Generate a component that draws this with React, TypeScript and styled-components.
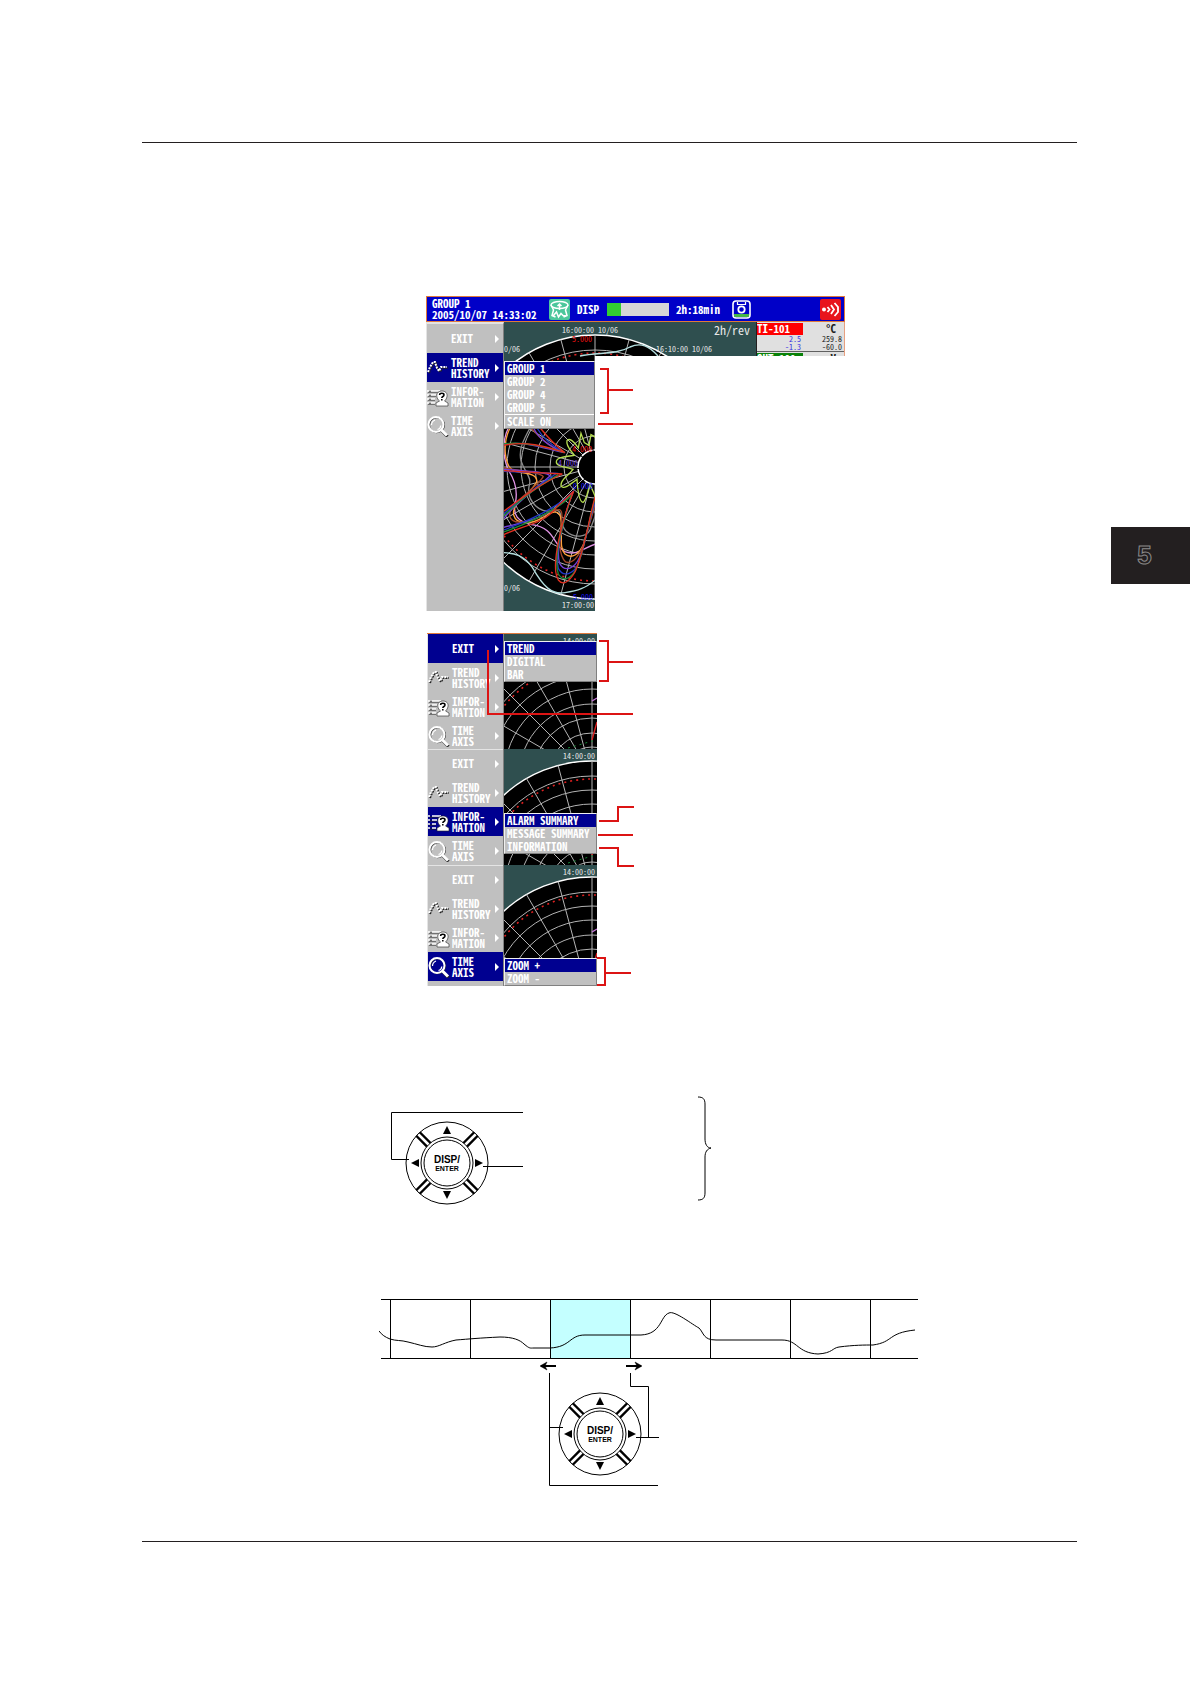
import React from "react";
import styled, { createGlobalStyle } from "styled-components";

const INK = "#231f20";
const RED = "#dc1414";
const PIXEL_FONT = '"Noto Sans Mono CJK JP", "Noto Sans Mono CJK SC", "Liberation Mono", monospace';

const GlobalStyle = createGlobalStyle`
  *, *::before, *::after { box-sizing: border-box; }
  body { margin: 0; background: #fff; }
  svg { display: block; }
`;

/* ---------- page frame ---------- */

const Page = styled.div`
  display: grid;
  grid-template-columns: minmax(0, 1fr) 80px;
  font-family: "Liberation Sans", Arial, sans-serif;
  color: ${INK};
`;

const Sheet = styled.div`
  padding: 142px 34px 142px 142px;
`;

const Content = styled.main`
  display: flex;
  flex-direction: column;
  align-items: flex-start;
  border-top: 1px solid ${INK};
  border-bottom: 1px solid ${INK};
  padding: 153px 0 46px;
`;

const Figure = styled.figure<{ $indent: number; $gap: number }>`
  margin: ${(p) => p.$gap}px 0 0 ${(p) => p.$indent}px;
`;

const ChapterTab = styled.aside`
  display: flex;
  align-items: center;
  justify-content: center;
  align-self: start;
  margin: 527px 1px 0 0;
  height: 57px;
  padding-right: 12px;
  background: ${INK};
  color: ${INK};
  font-size: 26px;
  font-weight: 700;
  line-height: 57px;
  -webkit-text-stroke: 1px #8c8a8a;
`;

/* ---------- recorder screen ---------- */

const Recorder = styled.div`
  width: 419px;
  font-family: ${PIXEL_FONT};
`;

const TitleBar = styled.header`
  display: grid;
  grid-template-columns: 117px 28px 30px 69px 56px 1fr auto;
  align-items: center;
  height: 26px;
  padding: 0 3px 0 5px;
  border: 1px solid #e07a3c;
  background: #0000c8;
  color: #fff;
  font-size: 11px;
  line-height: 11px;
  font-weight: 700;
  white-space: nowrap;
`;

const Stamp = styled.span`
  display: grid;
  grid-template-rows: 11px 11px;
`;

const Progress = styled.div`
  width: 62px;
  height: 13px;
  background: #d6d6d6;
`;

const ProgressFill = styled.div`
  width: 14px;
  height: 100%;
  background: #32cd32;
`;

const RecorderBody = styled.div`
  display: grid;
  grid-template-columns: 78px 91px 1fr 89px;
  grid-template-rows: 34px 255px;
`;

const Menu = styled.nav`
  display: flex;
  flex-direction: column;
  grid-column: 1;
  grid-row: 1 / -1;
  overflow: hidden;
  background: #c0c0c0;
  border-top: 2px solid #e4e4e4;
  border-left: 1px solid #e4e4e4;
  border-right: 1px solid #808080;
`;

const MenuButton = styled.button<{ $active?: boolean }>`
  display: grid;
  grid-template-columns: 24px 1fr 8px;
  align-items: center;
  flex: none;
  height: 29px;
  padding: 0;
  border: 0;
  border-radius: 0;
  background: ${(p) => (p.$active ? "#000090" : "transparent")};
  color: #fff;
  font-family: ${PIXEL_FONT};
  font-size: 11px;
  line-height: 11px;
  font-weight: 700;
  text-align: left;
  white-space: pre;
`;

const Arrow = styled.span`
  width: 0;
  height: 0;
  border-left: 4px solid #fff;
  border-top: 4px solid transparent;
  border-bottom: 4px solid transparent;
`;

const SubMenu = styled.div<{ $top: number }>`
  grid-column: 2;
  grid-row: -2;
  align-self: start;
  z-index: 1;
  min-width: 0;
  margin-top: ${(p) => p.$top}px;
  border: 1px solid #f0f0f0;
  border-right-color: #808080;
  border-bottom-color: #808080;
  background: #c0c0c0;
`;

const SubItem = styled.button<{ $active?: boolean; $ruled?: boolean }>`
  display: block;
  width: 100%;
  height: ${(p) => (p.$ruled ? 14 : 13)}px;
  padding: 0 0 0 2px;
  border: 0;
  border-radius: 0;
  border-top: ${(p) => (p.$ruled ? "1px solid #fff" : "0")};
  background: ${(p) => (p.$active ? "#000090" : "transparent")};
  color: #fff;
  font-family: ${PIXEL_FONT};
  font-size: 11px;
  line-height: 13px;
  font-weight: 700;
  text-align: left;
  white-space: nowrap;
`;

const WideChart = styled.svg`
  grid-column: 2 / 4;
  grid-row: 1 / -1;
`;

const RecorderCallouts = styled.svg`
  grid-column: 3 / 5;
  grid-row: 2;
  z-index: 1;
`;

const Readouts = styled.div`
  grid-column: 4;
  grid-row: 1;
  overflow: hidden;
  border-left: 1px solid ${INK};
  border-right: 1px solid #e8a080;
  background: #e0e0e0;
`;

const Channel = styled.div`
  display: grid;
  grid-template-columns: 46px 1fr;
  grid-template-rows: 12px 8px 8px;
  height: 30px;
  padding-top: 1px;
  border-bottom: 1px solid #606060;
  font-size: 8px;
  line-height: 8px;
  color: #202020;
  text-align: right;
`;

const ChannelTag = styled.span<{ $color: string }>`
  background: ${(p) => p.$color};
  color: #fff;
  font-size: 11px;
  line-height: 11px;
  font-weight: 700;
  text-align: left;
`;

const ChannelUnit = styled.span`
  padding-right: 8px;
  font-size: 11px;
  line-height: 11px;
  font-weight: 700;
`;

const ChannelValue = styled.span<{ $blue?: boolean }>`
  padding-right: 2px;
  color: ${(p) => (p.$blue ? "#3a32e0" : "inherit")};
`;

/* ---------- menu panels ---------- */

const PanelGroup = styled.div`
  display: grid;
  grid-template-columns: 170px 38px;
  font-family: ${PIXEL_FONT};
`;

const PanelStack = styled.div`
  grid-column: 1;
  grid-row: 1;
  border-top: 1px solid #e07a3c;
`;

const Panel = styled.section<{ $height: number }>`
  display: grid;
  grid-template-columns: 77px 93px;
  grid-template-rows: ${(p) => p.$height}px;
  overflow: hidden;

  nav {
    border-top-width: 0;
    box-shadow: inset 0 1px #e4e4e4;
  }
`;

const PanelChart = styled.svg`
  grid-column: 2;
  grid-row: 1;
`;

const PanelCallouts = styled.svg`
  grid-column: 1 / 3;
  grid-row: 1;
  z-index: 2;
  pointer-events: none;
`;

/* ---------- icons ---------- */

const IconTrend = () => (
  <svg width="22" height="22" viewBox="0 0 22 22" fill="none">
    <path d="M2 16L4 11L7 6L9 6L11 12L13 15L15 11L21 11" stroke="#222" strokeWidth="2" strokeDasharray="2 1" />
    <path d="M1 15L3 10L6 5L8 5L10 11L12 14L14 10L20 10" stroke="#fff" strokeWidth="2" strokeDasharray="2 1" />
  </svg>
);

const IconInfo = () => (
  <svg width="22" height="22" viewBox="0 0 22 22" fill="none">
    <path d="M1 6H14M1 10H9M1 14H8M1 18H8" stroke="#222" strokeWidth="1.2" />
    <path d="M0 5H2M4 5H13M0 9H2M4 9H9M0 13H2M4 13H8M0 17H2M4 17H8" stroke="#fff" strokeWidth="1.600" />
    <path d="M9 20V17L12.500 15C9.500 13 9 8 11 6.500C13 4.500 17 4.500 19 6.500C21 8.500 20 13 17.500 15L21 17V20Z" fill="#fff" stroke="#222" strokeWidth="0.600" />
    <path d="M12.600 9C12.600 6.800 17 6.800 17 9C17 10.600 14.800 10.400 14.800 12M14.800 13V14.400" stroke="#000" strokeWidth="1.500" />
  </svg>
);

const IconLens = () => (
  <svg width="22" height="22" viewBox="0 0 22 22" fill="none">
    <circle cx="9.800" cy="10" r="7.500" stroke="#333" strokeWidth="1.400" />
    <path d="M15 16L20.500 21.500" stroke="#222" strokeWidth="3" />
    <circle cx="9" cy="9.500" r="7.500" stroke="#fff" strokeWidth="2" />
    <path d="M14.500 15L20 20.500" stroke="#fff" strokeWidth="3" />
    <path d="M4.500 10C4.500 7.500 5.500 6 8 5M10.500 14.500C12.400 14 13.600 12.600 13.800 10.500" stroke="#fff" strokeWidth="1.200" />
  </svg>
);

const IconChartDisk = () => (
  <svg width="21" height="21" viewBox="0 0 21 21" fill="none">
    <rect width="21" height="21" rx="2" fill="#4cc79c" />
    <ellipse cx="10.500" cy="6" rx="8.500" ry="3.500" stroke="#fff" strokeWidth="1.500" />
    <path d="M2 6L4.500 11L3 16.500L6.500 18M19 6L16.500 11L18 16.500L14.500 18" stroke="#fff" strokeWidth="1.500" />
    <path d="M10.500 11V5M8.500 7L10.500 5L12.500 7" stroke="#fff" strokeWidth="1.500" />
    <path d="M4 17L7.500 13L9.500 18L12 14.500L14 16.500L17 17" stroke="#fff" strokeWidth="1.500" />
  </svg>
);

const IconSnapshot = () => (
  <svg width="19" height="19" viewBox="0 0 19 19" fill="none">
    <rect x="1" y="1" width="17" height="17" rx="3" fill="#0000c8" stroke="#fff" strokeWidth="1.600" />
    <path d="M2 14H17V16L16 17H3L2 16Z" fill="#45b845" />
    <path d="M5.500 2V4.500H13.500V2" stroke="#fff" strokeWidth="1.200" />
    <circle cx="9.500" cy="9.500" r="3.200" stroke="#fff" strokeWidth="1.800" />
  </svg>
);

const IconAlarm = () => (
  <svg width="21" height="21" viewBox="0 0 21 21" fill="none">
    <rect width="21" height="21" rx="2" fill="#e8141c" />
    <circle cx="4" cy="10.500" r="2" fill="#fff" />
    <path d="M7.500 8L9.500 10.500L7.500 13M11 6L14 10.500L11 15M14.500 4L18 8V13L14.500 17" stroke="#fff" strokeWidth="1.800" />
  </svg>
);

/* ---------- charts ---------- */

const SPOKES = Array.from({ length: 24 }, (_, i) => (i * Math.PI) / 12);

const ChartText = styled.text`
  font-family: ${PIXEL_FONT};
  font-size: 8px;
`;

function PolarGrid({ cx, cy, rings, outer, inner }: { cx: number; cy: number; rings: number[]; outer: number; inner: number }) {
  return (
    <g fill="none">
      <circle cx={cx} cy={cy} r={outer} fill="#000" stroke="#fff" strokeWidth="1.400" />
      {rings.map((r) => (
        <circle key={r} cx={cx} cy={cy} r={r} stroke="#b4b4b4" />
      ))}
      {SPOKES.map((a) => (
        <line
          key={a}
          x1={cx + inner * Math.sin(a)}
          y1={cy + inner * Math.cos(a)}
          x2={cx + outer * Math.sin(a)}
          y2={cy + outer * Math.cos(a)}
          stroke="#b4b4b4"
        />
      ))}
      <circle cx={cx} cy={cy} r={outer - 18} stroke="#e02020" strokeWidth="1.600" strokeDasharray="2 4" />
    </g>
  );
}

const TRACES: [string, string][] = [
  ["#8c8c8c", "M345 -36C325 0 310 30 318 62C330 100 352 110 342 140C335 190 380 220 412 212C450 200 430 250 452 272C480 298 515 290 525 270L542 225"],
  ["#e294e6", "M280 -36C262 0 262 50 280 90C300 120 308 150 302 185C290 225 310 245 350 254C420 262 415 318 452 336C485 348 510 322 542 312"],
  ["#b4dede", "M266 338C300 340 325 345 352 382C385 440 410 465 450 458C490 452 510 445 542 420"],
  ["#ffa03c", "M285 -36C262 10 266 80 300 94C340 100 372 104 364 128C340 170 290 188 296 225C305 258 352 252 384 232C410 214 432 208 437 232C445 280 430 322 450 342C470 358 492 344 506 312L542 180"],
  ["#a04628", "M348 -36C380 0 410 26 448 38M266 84C320 92 380 98 385 110C360 150 280 190 284 228C292 262 360 242 400 218C430 205 445 200 440 240C432 300 430 345 452 366C474 374 490 350 504 318L542 190"],
  ["#7440d8", "M356 -36C372 0 410 22 448 38C400 30 330 0 266 14M266 88C330 92 400 96 405 108C370 140 300 190 266 236M266 262C310 250 370 240 410 210C450 190 455 170 474 155C450 220 420 330 434 370C450 400 480 384 494 352C515 300 520 240 542 185"],
  ["#2038c8", "M366 -36C382 -8 414 20 450 38M266 94L425 100C370 140 320 170 266 222M266 270C320 250 420 210 474 156C450 220 418 335 430 385C446 416 480 400 492 366C515 300 522 238 542 176"],
  ["#188c38", "M266 12C320 4 400 20 450 38M430 104C360 145 320 175 266 228M266 276C320 258 430 210 470 165C450 230 412 350 430 402C448 430 474 412 488 378C512 310 522 238 542 170"],
  ["#e03020", "M266 16C330 2 390 18 450 38C415 12 395 -12 376 -36M266 92L442 102C380 130 325 170 266 214M266 284C330 255 390 250 424 202C448 180 462 168 476 154C444 230 404 380 430 420C444 438 462 426 480 396C512 320 522 232 542 165"],
  ["#b4dc50", "M542 -8L528 -16L522 16L508 8L498 -20L490 24C478 4 462 -8 456 2C452 18 468 32 478 46C450 50 424 52 424 66C424 80 452 80 474 88C460 108 436 118 438 136C442 152 466 134 486 118C488 150 492 186 504 187C516 180 518 150 524 136C530 140 536 160 542 172"],
];

const RecorderTrend = () => (
  <WideChart width="252" height="289" viewBox="0 0 252 289">
    <defs>
      <clipPath id="visible-area">
        <path d="M0 0H252V34H91V289H0Z" />
      </clipPath>
    </defs>
    <g clipPath="url(#visible-area)">
      <rect width="252" height="289" fill="#2f4f4f" />
      <PolarGrid cx={91} cy={145} outer={132} inner={17} rings={[31, 45, 60, 74, 88, 102, 117]} />
      <path d="M76 34C95 30 112 33 126 25C137 20 145 24 154 34" fill="none" stroke="#b4dede" strokeWidth="1.400" />
      <g transform="translate(-89 118) scale(0.3333)" fill="none" strokeWidth="4">
        {TRACES.map(([color, d]) => (
          <path key={color} d={d} stroke={color} />
        ))}
      </g>
      <circle cx="91" cy="145" r="17" fill="#000" stroke="#fff" strokeWidth="1.500" strokeDasharray="12 1" />
      <ChartText x="58" y="11" fill="#e8e8e8">16:00:00 10/06</ChartText>
      <ChartText x="152" y="30" fill="#e8e8e8">16:10:00 10/06</ChartText>
      <ChartText x="0" y="30" fill="#e8e8e8">0/06</ChartText>
      <ChartText x="0" y="269" fill="#e8e8e8">0/06</ChartText>
      <ChartText x="58" y="286" fill="#e8e8e8">17:00:00</ChartText>
      <ChartText x="68" y="20" fill="#f01010">5.000</ChartText>
      <ChartText x="68" y="130" fill="#f01010">4.000</ChartText>
      <ChartText x="54" y="144" fill="#7440d8">4.000</ChartText>
      <ChartText x="69" y="167" fill="#1414f0">0.000</ChartText>
      <ChartText x="69" y="278" fill="#1414f0">5.000</ChartText>
      <text x="210" y="13" fontSize="12" fontFamily={PIXEL_FONT} fill="#e8e8e8">
        2h/rev
      </text>
    </g>
  </WideChart>
);

const PanelTrend = ({ height, trace }: { height: number; trace: string }) => (
  <PanelChart width="93" height={height} viewBox={`0 0 93 ${height}`}>
    <rect width="93" height={height} fill="#2f4f4f" />
    <PolarGrid cx={88} cy={143} outer={131} inner={20} rings={[30, 44, 59, 73, 88, 102, 116]} />
    <path d={trace} fill="none" stroke="#c878dc" strokeWidth="1.400" />
    <path d="M88 106L93 88" stroke="#e02020" strokeWidth="1.400" />
    <path d="M64 114L92 106" stroke="#188c38" strokeDasharray="2 4" />
    <ChartText x="59" y="10" fill="#e8e8e8">14:00:00</ChartText>
  </PanelChart>
);

/* ---------- menus ---------- */

const ENTRIES = [
  { label: "EXIT", icon: null },
  { label: "TREND\nHISTORY", icon: <IconTrend /> },
  { label: "INFOR-\nMATION", icon: <IconInfo /> },
  { label: "TIME\nAXIS", icon: <IconLens /> },
];

const MainMenu = ({ active }: { active: number }) => (
  <Menu>
    {ENTRIES.map((entry, i) => (
      <MenuButton key={entry.label} type="button" $active={i === active}>
        <span>{entry.icon}</span>
        {entry.label}
        <Arrow />
      </MenuButton>
    ))}
  </Menu>
);

const Options = ({ top, items, ruled }: { top: number; items: string[]; ruled?: string }) => (
  <SubMenu $top={top}>
    {items.map((item, i) => (
      <SubItem key={item} type="button" $active={i === 0}>
        {item}
      </SubItem>
    ))}
    {ruled && (
      <SubItem type="button" $ruled>
        {ruled}
      </SubItem>
    )}
  </SubMenu>
);

/* ---------- key pad ---------- */

const KeyPad = ({ cx, cy }: { cx: number; cy: number }) => (
  <g transform={`translate(${cx} ${cy})`} fill="none" stroke="#000">
    <circle r="41" fill="#fff" strokeWidth="1" />
    {[45, 135, 225, 315].map((angle) => (
      <path key={angle} transform={`rotate(${angle})`} d="M24 -2.500H41M24 2.500H41" strokeWidth="2.400" />
    ))}
    <circle r="26" fill="#fff" strokeWidth="1" />
    <circle r="23" strokeWidth="1" />
    <path d="M0 -37L4 -29H-4ZM0 36L4 28H-4ZM-36 0L-28 -4V4ZM36 0L28 -4V4Z" fill="#000" stroke="none" />
    <g fill="#000" stroke="none" textAnchor="middle" fontFamily='"Liberation Sans", Arial, sans-serif' fontWeight="700">
      <text y="0" fontSize="10">DISP/</text>
      <text y="8" fontSize="7">ENTER</text>
    </g>
  </g>
);

export default function App() {
  return (
    <Page>
      <GlobalStyle />
      <Sheet>
        <Content>
          <Figure $indent={284} $gap={0}>
            <Recorder>
              <TitleBar>
                <Stamp>
                  <span>GROUP 1</span>
                  <span>2005/10/07 14:33:02</span>
                </Stamp>
                <IconChartDisk />
                <span>DISP</span>
                <Progress>
                  <ProgressFill />
                </Progress>
                <span>2h:18min</span>
                <IconSnapshot />
                <IconAlarm />
              </TitleBar>
              <RecorderBody>
                <MainMenu active={1} />
                <RecorderTrend />
                <Readouts>
                  <Channel>
                    <ChannelTag $color="#ff0000">TI-101</ChannelTag>
                    <ChannelUnit>°C</ChannelUnit>
                    <ChannelValue $blue>2.5</ChannelValue>
                    <ChannelValue>259.8</ChannelValue>
                    <ChannelValue $blue>-1.3</ChannelValue>
                    <ChannelValue>-60.0</ChannelValue>
                  </Channel>
                  <Channel>
                    <ChannelTag $color="#0a820a">OUT-100</ChannelTag>
                    <ChannelUnit>V</ChannelUnit>
                  </Channel>
                </Readouts>
                <Options top={5} items={["GROUP 1", "GROUP 2", "GROUP 4", "GROUP 5"]} ruled="SCALE ON" />
                <RecorderCallouts width="40" height="80" viewBox="0 0 40 80" fill="none" stroke={RED} strokeWidth="2">
                  <path d="M5 13H13V57H5M13 34H38M3 68H38" />
                </RecorderCallouts>
              </RecorderBody>
            </Recorder>
          </Figure>

          <Figure $indent={285} $gap={22}>
            <PanelGroup>
              <PanelStack>
                <Panel $height={115}>
                  <MainMenu active={0} />
                  <PanelTrend height={115} trace="M93 64L88 67" />
                  <Options top={7} items={["TREND", "DIGITAL", "BAR"]} />
                </Panel>
                <Panel $height={116}>
                  <MainMenu active={2} />
                  <PanelTrend height={116} trace="" />
                  <Options top={64} items={["ALARM SUMMARY", "MESSAGE SUMMARY", "INFORMATION"]} />
                </Panel>
                <Panel $height={121}>
                  <MainMenu active={3} />
                  <PanelTrend height={121} trace="M93 64L88 67" />
                  <Options top={93} items={["ZOOM +", "ZOOM -"]} />
                </Panel>
              </PanelStack>
              <PanelCallouts width="208" height="353" viewBox="0 0 208 353" fill="none" stroke={RED} strokeWidth="2">
                <path d="M172 8H181V48H172M181 29H206" />
                <path d="M61 17V81H206" />
                <path d="M172 188H191V174H207M171 202H206M172 215H191V233H207" />
                <path d="M170 325H178V352H170M178 340H204" />
              </PanelCallouts>
            </PanelGroup>
          </Figure>

          <Figure $indent={248} $gap={106}>
            <svg width="322" height="114" viewBox="0 0 322 114" fill="none" stroke="#000">
              <KeyPad cx={57} cy={71} />
              <path d="M133 20.500H1.500V67.500H19M93 74.500H133" />
              <path d="M308 5C313 5 315 7 315 12V47C315 52 317 56 321 56C317 57 315 60 315 65V101C315 106 313 108 308 108" />
            </svg>
          </Figure>

          <Figure $indent={237} $gap={84}>
            <svg width="540" height="205" viewBox="0 0 540 205" fill="none" stroke="#000">
              <rect x="171" y="10" width="80" height="58" fill="#c4ffff" stroke="none" />
              <path d="M2 9.500H539M2 68.500H539" />
              <path d="M11.500 9V69M91.500 9V69M171.500 9V69M251.500 9V69M331.500 9V69M411.500 9V69M491.500 9V69" />
              <path d="M0 41C3 45 6 47 11 49C17 51 22 50 29 52C38 54 45 57 53 57C60 57 66 52 77 50C90 49 100 48 121 47C134 47 141 50 145 54C151 59 151 58 155 58H171C192 57 190 45 206 45H262C283 44 281 26 290 23C295 20 314 35 320 38C325 43 324 50 337 50H403C419 50 418 63 439 64C454 63 453 58 460 57C475 55 486 55 494 55C515 52 508 43 536 40" />
              <path d="M162 76H177M247 76H262" strokeWidth="2" />
              <path d="M161 76L168 72L166 76L168 80ZM263 76L256 72L258 76L256 80Z" fill="#000" strokeWidth="0.500" />
              <KeyPad cx={221} cy={144} />
              <path d="M170.500 83V195.500H279M170.500 137.500H184M251.500 83V96.500H269.500V147M257 147.500H280" />
            </svg>
          </Figure>
        </Content>
      </Sheet>
      <ChapterTab>5</ChapterTab>
    </Page>
  );
}
